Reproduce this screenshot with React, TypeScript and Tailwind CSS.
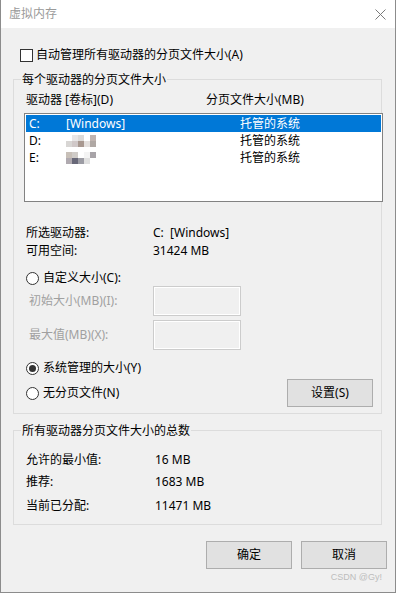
import React from "react";

const Radio = ({ checked }: { checked?: boolean }) => (
  <span className="w-[13px] h-[13px] rounded-full border border-[#333333] bg-white flex items-center justify-center shrink-0">
    {checked && <span className="w-[7px] h-[7px] rounded-full bg-[#333333]" />}
  </span>
);

const Mosaic = ({ rows }: { rows: string[][] }) => (
  <span className="flex flex-col">
    {rows.map((r, i) => (
      <span key={i} className="flex">
        {r.map((c, j) => (
          <span key={j} className="w-[6px] h-[6px]" style={{ background: c }} />
        ))}
      </span>
    ))}
  </span>
);

export default function App() {
  return (
    <div className="w-[396px] h-[593px] bg-[#f0f0f0] border-l border-r border-b border-[#8c8c8c] flex flex-col font-['Noto_Sans','Noto_Sans_CJK_SC',sans-serif] text-[12px] leading-[16px] text-black overflow-hidden">
      {/* Title bar */}
      <div className="h-[28px] bg-white flex items-center pl-[8px] pr-[9px] shrink-0">
        <span className="text-[#9a9a9a]">虚拟内存</span>
        <svg className="ml-auto" width="11" height="11" viewBox="0 0 11 11">
          <path d="M0.5 0.5L10.5 10.5M10.5 0.5L0.5 10.5" stroke="#7a7a7a" strokeWidth="1" />
        </svg>
      </div>

      {/* Auto manage checkbox */}
      <div className="h-[16px] mt-[19px] ml-[19px] flex items-center gap-[3px]">
        <span className="w-[13px] h-[13px] border border-[#333333] bg-white shrink-0" />
        <span>自动管理所有驱动器的分页文件大小(A)</span>
      </div>

      {/* Group 1 */}
      <div className="relative mt-[16px] ml-[12px] mr-[13px] border border-[#dcdcdc] flex flex-col pb-[6px]">
        <span className="absolute left-[7px] top-[-8px] px-[1px] bg-[#f0f0f0] leading-[16px]">每个驱动器的分页文件大小</span>

        <div className="h-[16px] mt-[12px] ml-[12px] flex items-center">
          <span className="w-[180px]">驱动器 [卷标](D)</span>
          <span>分页文件大小(MB)</span>
        </div>

        <div className="mt-[5px] ml-[10px] w-[359px] h-[89px] border border-[#828282] bg-white p-[1px] flex flex-col">
          <div className="h-[17px] bg-[#0078d7] text-white flex items-center pl-[3px]">
            <span className="w-[37px]">C:</span>
            <span className="w-[174px]">[Windows]</span>
            <span>托管的系统</span>
          </div>
          <div className="h-[17px] flex items-center pl-[3px]">
            <span className="w-[37px]">D:</span>
            <span className="w-[174px] flex">
              <Mosaic
                rows={[
                  ["#ffffff", "#e8e6e6", "#dcdad8", "#ffffff", "#c0b4b0"],
                  ["#d8d6d4", "#d0c8c8", "#a89890", "#e4e0de", "#b0a8a4"],
                ]}
              />
            </span>
            <span>托管的系统</span>
          </div>
          <div className="h-[17px] flex items-center pl-[3px]">
            <span className="w-[37px]">E:</span>
            <span className="w-[174px] flex">
              <Mosaic
                rows={[
                  ["#c8c0b8", "#d0ccc8", "#ffffff", "#f4f4f4", "#a8a4a8"],
                  ["#b0aab0", "#686878", "#9c9ca4", "#e0e0e0", "#ffffff"],
                ]}
              />
            </span>
            <span>托管的系统</span>
          </div>
        </div>

        <div className="h-[18px] mt-[22px] ml-[12px] flex items-center">
          <span className="w-[127px]">所选驱动器:</span>
          <span>C:&nbsp;&nbsp;[Windows]</span>
        </div>
        <div className="h-[18px] ml-[12px] flex items-center">
          <span className="w-[127px]">可用空间:</span>
          <span>31424 MB</span>
        </div>

        <div className="h-[18px] mt-[9px] ml-[12px] flex items-center gap-[4px]">
          <Radio />
          <span>自定义大小(C):</span>
        </div>

        <div className="h-[30px] mt-[-1px] ml-[15px] flex items-center">
          <span className="w-[124px] text-[#a0a0a0]">初始大小(MB)(I):</span>
          <span className="w-[88px] h-[30px] border border-[#cccccc] shadow-[inset_0_0_0_1px_#ffffff] bg-[#f0f0f0]" />
        </div>
        <div className="h-[30px] mt-[4px] ml-[15px] flex items-center">
          <span className="w-[124px] text-[#a0a0a0]">最大值(MB)(X):</span>
          <span className="w-[88px] h-[30px] border border-[#cccccc] shadow-[inset_0_0_0_1px_#ffffff] bg-[#f0f0f0]" />
        </div>

        <div className="h-[18px] mt-[9px] ml-[12px] flex items-center gap-[4px]">
          <Radio checked />
          <span>系统管理的大小(Y)</span>
        </div>

        <div className="h-[28px] mt-[2px] ml-[12px] mr-[8px] flex items-center">
          <Radio />
          <span className="ml-[4px]">无分页文件(N)</span>
          <button className="ml-auto w-[86px] h-[28px] border border-[#adadad] bg-[#e1e1e1] flex items-center justify-center">
            设置(S)
          </button>
        </div>
      </div>

      {/* Group 2 */}
      <div className="relative mt-[16px] ml-[12px] mr-[13px] border border-[#dcdcdc] flex flex-col pb-[7px]">
        <span className="absolute left-[7px] top-[-8px] px-[1px] bg-[#f0f0f0] leading-[16px]">所有驱动器分页文件大小的总数</span>
        <div className="h-[22px] mt-[18px] ml-[12px] flex items-center">
          <span className="w-[129px]">允许的最小值:</span>
          <span>16 MB</span>
        </div>
        <div className="h-[22px] ml-[12px] flex items-center">
          <span className="w-[129px]">推荐:</span>
          <span>1683 MB</span>
        </div>
        <div className="h-[22px] mt-[2px] ml-[12px] flex items-center">
          <span className="w-[129px]">当前已分配:</span>
          <span>11471 MB</span>
        </div>
      </div>

      {/* Buttons */}
      <div className="mt-[16px] mr-[8px] flex justify-end gap-[9px]">
        <button className="w-[86px] h-[28px] border border-[#adadad] bg-[#e1e1e1] flex items-center justify-center">确定</button>
        <button className="w-[86px] h-[28px] border border-[#adadad] bg-[#e1e1e1] flex items-center justify-center">取消</button>
      </div>
      <div className="mt-[2px] mr-[13px] h-[12px] flex justify-end items-center text-[9px] leading-[12px] text-[#bdbdbd] font-['Liberation_Sans',sans-serif]">
        CSDN @Gy!
      </div>
    </div>
  );
}
